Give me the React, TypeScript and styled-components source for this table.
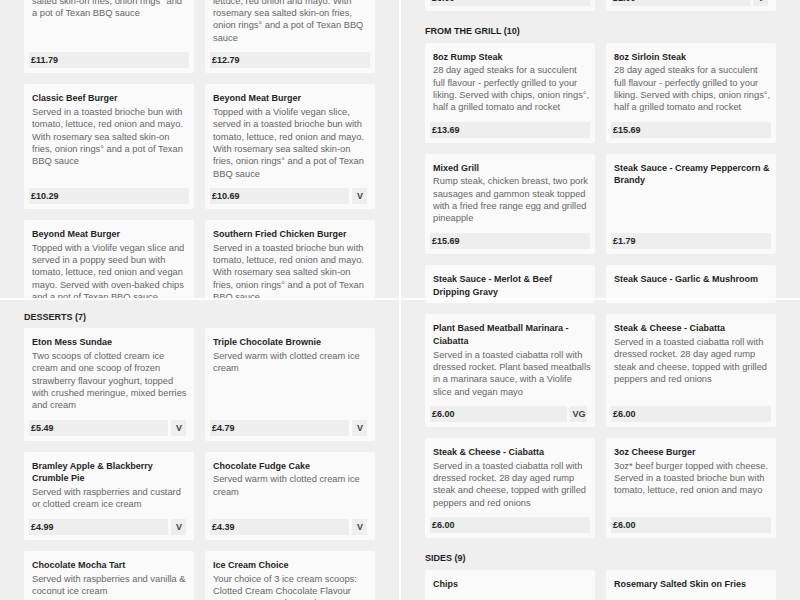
import React from "react";
import styled, { createGlobalStyle } from "styled-components";

type Item = { title: string[]; desc: string[]; price: string; tag?: string };
type Block =
  | { kind: "heading"; text: string }
  | { kind: "grid"; items: Item[] };
type PanelData = { offset: number; blocks: Block[] };

const GlobalStyle = createGlobalStyle`
  html, body { margin: 0; padding: 0; background: #ffffff; }
  body { font-family: "Liberation Sans", Arial, sans-serif; }
`;

const Screen = styled.main`
  width: 800px;
  height: 600px;
  display: grid;
  grid-template-columns: 399px 399px;
  grid-template-rows: 298px 300px;
  column-gap: 2px;
  row-gap: 2px;
  background: #ffffff;
  overflow: hidden;
`;

const Panel = styled.section`
  background: #efefef;
  overflow: hidden;
  padding: 0 24px;
`;

const Scroll = styled.div<{ $offset: number }>`
  display: flow-root;
  margin-top: ${(p) => p.$offset}px;
`;

const Heading = styled.h2`
  margin: 14px 0 4.7px;
  font-size: 9px;
  line-height: 13px;
  font-weight: 700;
  color: #1f1f1f;
  white-space: nowrap;
`;

const Grid = styled.div`
  display: grid;
  grid-template-columns: 170px 170px;
  column-gap: 11px;
  row-gap: 11px;
`;

const Card = styled.article`
  display: flex;
  flex-direction: column;
  background: #fafafa;
  border-radius: 2px;
  padding: 8px 5px 5px;
`;

const Title = styled.h3`
  margin: 0 0 1px;
  padding: 0 3px;
  font-size: 9px;
  line-height: 12.7px;
  font-weight: 700;
  color: #1f1f1f;
  white-space: nowrap;
`;

const Desc = styled.p`
  margin: 0;
  padding: 0 3px;
  font-size: 9.3px;
  line-height: 12.35px;
  color: #666666;
  white-space: nowrap;
`;

const PriceRow = styled.div`
  display: flex;
  gap: 3.4px;
  margin-top: auto;
  padding-top: 8px;
  height: 16px;
`;

const Price = styled.span`
  flex: 1;
  background: #eeeeee;
  padding: 0 2px;
  font-size: 9px;
  font-weight: 700;
  line-height: 16px;
  color: #262626;
`;

const Tag = styled.span`
  min-width: 15px;
  box-sizing: border-box;
  padding: 0 2px;
  margin-right: 2.6px;
  background: #eeeeee;
  text-align: center;
  font-size: 9px;
  font-weight: 700;
  line-height: 16px;
  color: #444444;
`;

const lines = (arr: string[]) =>
  arr.map((l, i) => (
    <React.Fragment key={i}>
      {i > 0 && <br />}
      {l}
    </React.Fragment>
  ));

const MenuCard = ({ item }: { item: Item }) => (
  <Card>
    <Title>{lines(item.title)}</Title>
    {item.desc.length > 0 && <Desc>{lines(item.desc)}</Desc>}
    <PriceRow>
      <Price>{item.price}</Price>
      {item.tag && <Tag>{item.tag}</Tag>}
    </PriceRow>
  </Card>
);

const burgerDesc = [
  "Served in a toasted brioche bun with",
  "tomato, lettuce, red onion and mayo.",
  "With rosemary sea salted skin-on",
  "fries, onion rings° and a pot of Texan",
  "BBQ sauce",
];

const steakDesc = [
  "28 day aged steaks for a succulent",
  "full flavour - perfectly grilled to your",
  "liking. Served with chips, onion rings°,",
  "half a grilled tomato and rocket",
];

const steakCheese = [
  "Served in a toasted ciabatta roll with",
  "dressed rocket. 28 day aged rump",
  "steak and cheese, topped with grilled",
  "peppers and red onions",
];

const panels: PanelData[] = [
  {
    offset: -51.6,
    blocks: [
      {
        kind: "grid",
        items: [
          {
            title: ["Texan BBQ Burger"],
            desc: [
              "Served in a toasted brioche bun with",
              "lettuce and mayo. With rosemary sea",
              "salted skin-on fries, onion rings° and",
              "a pot of Texan BBQ sauce",
            ],
            price: "£11.79",
          },
          {
            title: ["Double Beef Burger"],
            desc: [
              "Topped with cheese. Served in a",
              "toasted brioche bun with tomato,",
              "lettuce, red onion and mayo. With",
              "rosemary sea salted skin-on fries,",
              "onion rings° and a pot of Texan BBQ",
              "sauce",
            ],
            price: "£12.79",
          },
          { title: ["Classic Beef Burger"], desc: burgerDesc, price: "£10.29" },
          {
            title: ["Beyond Meat Burger"],
            desc: [
              "Topped with a Violife vegan slice,",
              "served in a toasted brioche bun with",
              "tomato, lettuce, red onion and mayo.",
              "With rosemary sea salted skin-on",
              "fries, onion rings° and a pot of Texan",
              "BBQ sauce",
            ],
            price: "£10.69",
            tag: "V",
          },
          {
            title: ["Beyond Meat Burger"],
            desc: [
              "Topped with a Violife vegan slice and",
              "served in a poppy seed bun with",
              "tomato, lettuce, red onion and vegan",
              "mayo. Served with oven-baked chips",
              "and a pot of Texan BBQ sauce",
            ],
            price: "£10.69",
            tag: "VG",
          },
          { title: ["Southern Fried Chicken Burger"], desc: burgerDesc, price: "£10.69" },
        ],
      },
    ],
  },
  {
    offset: -89.1,
    blocks: [
      {
        kind: "grid",
        items: [
          {
            title: ["Beef Burger"],
            desc: [
              "Served in a toasted brioche bun with",
              "tomato, lettuce, red onion and mayo.",
              "With rosemary sea salted skin-on",
              "fries and onion rings°",
            ],
            price: "£6.00",
          },
          { title: ["Add a Beyond Meat Patty"], desc: [], price: "£1.00", tag: "V" },
        ],
      },
      { kind: "heading", text: "FROM THE GRILL (10)" },
      {
        kind: "grid",
        items: [
          { title: ["8oz Rump Steak"], desc: steakDesc, price: "£13.69" },
          { title: ["8oz Sirloin Steak"], desc: steakDesc, price: "£15.69" },
          {
            title: ["Mixed Grill"],
            desc: [
              "Rump steak, chicken breast, two pork",
              "sausages and gammon steak topped",
              "with a fried free range egg and grilled",
              "pineapple",
            ],
            price: "£15.69",
          },
          {
            title: ["Steak Sauce - Creamy Peppercorn &", "Brandy"],
            desc: [],
            price: "£1.79",
          },
          {
            title: ["Steak Sauce - Merlot & Beef", "Dripping Gravy"],
            desc: [],
            price: "£1.79",
          },
          { title: ["Steak Sauce - Garlic & Mushroom"], desc: [], price: "£1.79" },
        ],
      },
    ],
  },
  {
    offset: -3.4,
    blocks: [
      { kind: "heading", text: "DESSERTS (7)" },
      {
        kind: "grid",
        items: [
          {
            title: ["Eton Mess Sundae"],
            desc: [
              "Two scoops of clotted cream ice",
              "cream and one scoop of frozen",
              "strawberry flavour yoghurt, topped",
              "with crushed meringue, mixed berries",
              "and cream",
            ],
            price: "£5.49",
            tag: "V",
          },
          {
            title: ["Triple Chocolate Brownie"],
            desc: ["Served warm with clotted cream ice", "cream"],
            price: "£4.79",
            tag: "V",
          },
          {
            title: ["Bramley Apple & Blackberry", "Crumble Pie"],
            desc: ["Served with raspberries and custard", "or clotted cream ice cream"],
            price: "£4.99",
            tag: "V",
          },
          {
            title: ["Chocolate Fudge Cake"],
            desc: ["Served warm with clotted cream ice", "cream"],
            price: "£4.39",
            tag: "V",
          },
          {
            title: ["Chocolate Mocha Tart"],
            desc: ["Served with raspberries and vanilla &", "coconut ice cream"],
            price: "£4.79",
            tag: "V",
          },
          {
            title: ["Ice Cream Choice"],
            desc: [
              "Your choice of 3 ice cream scoops:",
              "Clotted Cream Chocolate Flavour",
              "Ice Cream, Strawberry Flavour Ice",
              "Cream or Clotted Cream Vanilla",
            ],
            price: "£3.99",
            tag: "V",
          },
        ],
      },
    ],
  },
  {
    offset: -96.8,
    blocks: [
      {
        kind: "grid",
        items: [
          {
            title: ["Chicken Club - Ciabatta"],
            desc: [
              "Served in a toasted ciabatta roll with",
              "dressed rocket. Chicken breast, bacon,",
              "cheese, tomato, lettuce and mayo",
              "with a side salad",
            ],
            price: "£6.00",
          },
          {
            title: ["Tuna Melt - Ciabatta"],
            desc: [
              "Served in a toasted ciabatta roll with",
              "dressed rocket. Tuna mayo and",
              "melted cheese",
            ],
            price: "£6.00",
          },
          {
            title: ["Plant Based Meatball Marinara -", "Ciabatta"],
            desc: [
              "Served in a toasted ciabatta roll with",
              "dressed rocket. Plant based meatballs",
              "in a marinara sauce, with a Violife",
              "slice and vegan mayo",
            ],
            price: "£6.00",
            tag: "VG",
          },
          { title: ["Steak & Cheese - Ciabatta"], desc: steakCheese, price: "£6.00" },
          { title: ["Steak & Cheese - Ciabatta"], desc: steakCheese, price: "£6.00" },
          {
            title: ["3oz Cheese Burger"],
            desc: [
              "3oz* beef burger topped with cheese.",
              "Served in a toasted brioche bun with",
              "tomato, lettuce, red onion and mayo",
            ],
            price: "£6.00",
          },
        ],
      },
      { kind: "heading", text: "SIDES (9)" },
      {
        kind: "grid",
        items: [
          { title: ["Chips"], desc: [], price: "£2.49", tag: "VG" },
          { title: ["Rosemary Salted Skin on Fries"], desc: [], price: "£2.99", tag: "VG" },
        ],
      },
    ],
  },
];

export default function App() {
  return (
    <>
      <GlobalStyle />
      <Screen>
        {panels.map((panel, pi) => (
          <Panel key={pi}>
            <Scroll $offset={panel.offset}>
              {panel.blocks.map((block, bi) =>
                block.kind === "heading" ? (
                  <Heading key={bi}>{block.text}</Heading>
                ) : (
                  <Grid key={bi}>
                    {block.items.map((item, ii) => (
                      <MenuCard key={ii} item={item} />
                    ))}
                  </Grid>
                )
              )}
            </Scroll>
          </Panel>
        ))}
      </Screen>
    </>
  );
}
